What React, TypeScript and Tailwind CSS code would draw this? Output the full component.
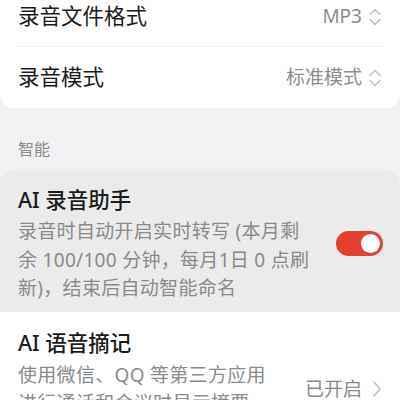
import React from "react";

const FONT = '"Noto Sans", "Noto Sans CJK SC", sans-serif';

function UpDown() {
  return (
    <svg width="14" height="22" viewBox="0 0 14 22" fill="none" stroke="#bdbdbd" strokeWidth={1.4} strokeLinecap="round" strokeLinejoin="round">
      <path d="M2 8.5 L7 3.5 L12 8.5" />
      <path d="M2 13.5 L7 18.5 L12 13.5" />
    </svg>
  );
}

function ChevronRight() {
  return (
    <svg width="10" height="18" viewBox="0 0 10 18" fill="none" stroke="#bdbdbd" strokeWidth={1.5} strokeLinecap="round" strokeLinejoin="round">
      <path d="M2 2 L8 9 L2 16" />
    </svg>
  );
}

function SelectRow({ label, value, first }: { label: string; value: string; first?: boolean }) {
  return (
    <div className={`flex items-center justify-between px-[18px] ${first ? "h-[59px]" : "h-[61px]"}`}>
      <span className="text-[21.5px] text-[#1b1b1b]">{label}</span>
      <div className="flex items-center gap-[6px]">
        <span className="text-[19px] text-[#8c8c8c]">{value}</span>
        <UpDown />
      </div>
    </div>
  );
}

export default function App() {
  return (
    <div className="w-[400px] h-[400px] overflow-hidden bg-[#f1f1f3]" style={{ fontFamily: FONT }}>
      <div className="bg-white rounded-b-[14px] -mt-[13px]">
        <SelectRow label="录音文件格式" value="MP3" first />
        <div className="mx-[18px] h-px bg-[#ececec]" />
        <SelectRow label="录音模式" value="标准模式" />
      </div>

      <div className="px-[18px] pt-[30px] pb-[9px] text-[16px] leading-[22px] text-[#8a8a8a]">智能</div>

      <div className="rounded-t-[14px] overflow-hidden bg-white">
        {/* pressed row */}
        <div className="flex items-center bg-[#ebebeb] pl-[18px] pr-[17px] pt-[16px] pb-[9px]">
          <div className="w-[300px]">
            <div className="text-[21.5px] leading-[30px] font-medium text-[#1b1b1b]">AI 录音助手</div>
            <div className="mt-[2px] text-[19px] leading-[28.5px] text-[#8a8a8a] tracking-[0.3px]">
              录音时自动开启实时转写 (本月剩余 100/100 分钟，每月1日 0 点刷新)，结束后自动智能命名
            </div>
          </div>
          <div className="ml-auto flex items-center">
            <div className="w-[47px] h-[25px] rounded-full bg-[#e5402f] flex items-center justify-end pr-[3px]">
              <div className="w-[19px] h-[19px] rounded-full bg-white" />
            </div>
          </div>
        </div>

        <div className="flex items-start pl-[18px] pr-[18px] pt-[16px]">
          <div className="flex-1 min-w-0 pr-[24px]">
            <div className="text-[21.5px] leading-[30px] font-medium text-[#1b1b1b]">AI 语音摘记</div>
            <div className="mt-[3px] text-[19px] leading-[28.5px] text-[#8a8a8a] tracking-[0.3px]">
              使用微信、QQ 等第三方应用进行通话和会议时显示摘要
            </div>
          </div>
          <div className="flex items-center gap-[10px] pt-[48px]">
            <span className="text-[19px] leading-[27px] text-[#8a8a8a]">已开启</span>
            <ChevronRight />
          </div>
        </div>
      </div>
    </div>
  );
}
